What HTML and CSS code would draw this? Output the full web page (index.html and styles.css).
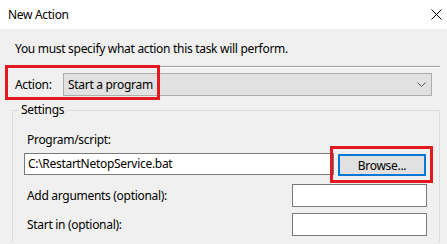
FILE: index.html
```html
<!DOCTYPE html>
<html>
    <head>
        <link rel="stylesheet" href="styles.css">
    </head>
    <body>
        <div class="titlebar">
            <span class="title">New Action</span>
            <svg class="close" width="11" height="11" viewBox="0 0 11 11">
                <path d="M0.5 0.5 L10.5 10.5 M10.5 0.5 L0.5 10.5" stroke="#000" stroke-width="1" fill="none"/>
            </svg>
        </div>

        <div class="dialog">
            <p class="intro">You must specify what action this task will perform.</p>
            <div class="rule"></div>

            <div class="action-row">
                <label class="action-label">Action:</label>
                <div class="combo">
                    <span>Start a program</span>
                    <svg width="9" height="5" viewBox="0 0 9 5">
                        <path d="M0.5 0.5 L4.5 4.5 L8.5 0.5" stroke="#555" stroke-width="1" fill="none"/>
                    </svg>
                </div>
                <div class="mark mark-action"></div>
            </div>

            <fieldset class="settings">
                <legend>Settings</legend>

                <label class="field-label">Program/script:</label>
                <div class="program-row">
                    <div class="textbox program">C:\RestartNetopService.bat</div>
                    <div class="browse-wrap">
                        <button class="browse">Browse...</button>
                        <div class="mark mark-browse"></div>
                    </div>
                </div>

                <div class="opt-row">
                    <label class="field-label">Add arguments (optional):</label>
                    <div class="textbox small"></div>
                </div>
                <div class="opt-row">
                    <label class="field-label">Start in (optional):</label>
                    <div class="textbox small"></div>
                </div>
            </fieldset>
        </div>
    </body>
</html>
```

FILE: styles.css
```css
* {
    box-sizing: border-box;
}

body {
    margin: 0;
    width: 447px;
    height: 244px;
    overflow: hidden;
    font-family: "Noto Sans", "Open Sans", sans-serif;
    font-size: 12px;
    line-height: 16px;
    letter-spacing: -0.3px;
    color: #000;
    background-color: #f0f0f0;
}

.titlebar {
    height: 29px;
    display: flex;
    align-items: center;
    justify-content: space-between;
    padding: 0 5px 0 8px;
    background-color: #ffffff;
}

.dialog {
    height: 215px;
    padding: 0 7px 0 12px;
    background-color: #f0f0f0;
}

.intro {
    margin: 0;
    padding: 12px 0 0 3px;
}

.rule {
    margin-top: 9px;
    border-top: 1px solid #a0a0a0;
    border-bottom: 1px solid #ffffff;
}

.action-row {
    position: relative;
    display: flex;
    align-items: center;
    height: 23px;
    margin-top: 5px;
}

.action-label {
    width: 51px;
    padding-left: 3px;
}

.combo {
    flex: 1;
    height: 23px;
    margin-right: 8px;
    display: flex;
    align-items: center;
    justify-content: space-between;
    padding: 0 5px 0 4px;
    background-color: #e1e1e1;
    border: 1px solid #adadad;
}

.mark {
    position: absolute;
    border: 3px solid #e3191f;
}

.mark-action {
    left: -7px;
    top: -8px;
    width: 155px;
    height: 35px;
}

.settings {
    margin: 6px 0 0 0;
    padding: 14px 0 0 11px;
    height: 140px;
    border: 1px solid #dcdcdc;
    border-bottom: none;
}

.settings legend {
    padding: 0 2px;
    margin-left: -5px;
}

.field-label {
    display: block;
    padding-left: 3px;
}

.program-row {
    display: flex;
    align-items: flex-start;
    margin-top: 5px;
}

.textbox {
    height: 23px;
    padding: 2px 3px;
    background-color: #ffffff;
    border: 1px solid #7a7a7a;
}

.program {
    width: 310px;
    height: 22px;
}

.browse-wrap {
    position: relative;
    margin: 1px 0 0 4px;
}

.browse {
    width: 88px;
    height: 22px;
    padding: 0;
    font-family: inherit;
    font-size: 12px;
    letter-spacing: inherit;
    color: #000;
    background-color: #e1e1e1;
    border: 2px solid #0078d7;
}

.mark-browse {
    left: -8px;
    top: -8px;
    width: 103px;
    height: 37px;
}

.opt-row {
    display: flex;
    align-items: center;
    justify-content: space-between;
    width: 403px;
    margin-top: 8px;
}

.opt-row + .opt-row {
    margin-top: 6px;
}

.small {
    width: 135px;
}
```
